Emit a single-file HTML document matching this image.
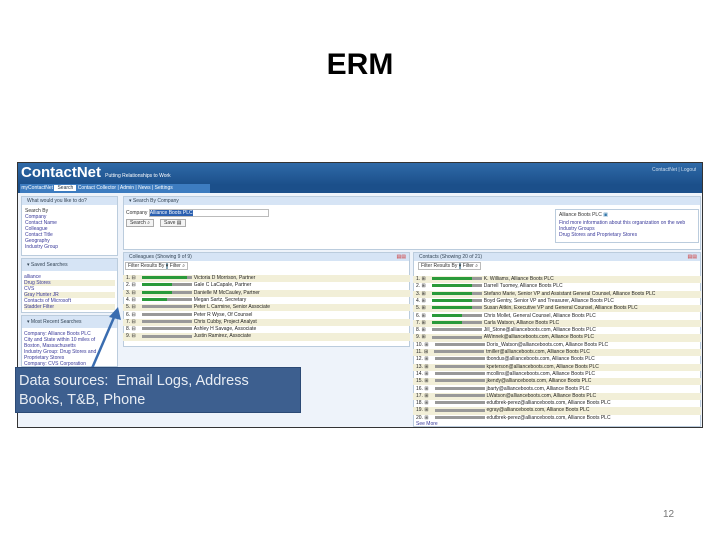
<!DOCTYPE html>
<html><head><meta charset="utf-8"><style>
*{margin:0;padding:0;box-sizing:border-box}
body{width:720px;height:540px;background:#fff;position:relative;overflow:hidden;font-family:"Liberation Sans",sans-serif}
.a{position:absolute}
.t{font-size:5px;color:#333;white-space:nowrap;overflow:hidden}
.row{position:absolute;height:7.3px;font-size:5px;line-height:7.3px;color:#222;white-space:nowrap;overflow:hidden;padding-left:3px}
.row:nth-child(odd){background:#f2efd8}
.bar{display:inline-block;width:50px;height:3px;background:#999;vertical-align:middle;margin:0 2px 0 6px}
.g{background:linear-gradient(90deg,#2a9a3a 0 60%,#999 60%)}
.lk{color:#3a3a9a;font-size:5px;line-height:6px}
.ph{background:#d6e4f5;height:8px;font-size:5px;line-height:8px;color:#345;padding-left:5px}
</style></head><body>
<div class="a" style="left:0;top:48px;width:720px;text-align:center;font-size:30px;font-weight:bold;color:#000;font-family:'Liberation Sans',sans-serif">ERM</div>

<div class="a" style="left:17px;top:162px;width:686px;height:266px;border:1px solid #333;background:#fff"></div>
<div class="a" style="left:18px;top:163px;width:684px;height:22px;background:linear-gradient(#2f6aa8,#1b4f8a)"></div>
<div class="a" style="left:21px;top:163px;font-size:15px;font-weight:bold;color:#fff;line-height:20px">ContactNet <span style="font-size:5px;font-weight:normal">Putting Relationships to Work</span></div>
<div class="a t" style="left:652px;top:167px;color:#cde">ContactNet | Logout</div>
<div class="a" style="left:18px;top:184px;width:684px;height:9px;background:#1b4f8a"></div>
<div class="a" style="left:20px;top:184px;height:9px;width:190px;background:#3d7cc0;font-size:5px;line-height:9px;color:#fff;white-space:nowrap">&nbsp;myContactNet <span style="background:#fff;color:#234;padding:0 3px">Search</span> Contact Collector | Admin | News | Settings</div>

<div class="a" style="left:18px;top:193px;width:684px;height:234px;background:#eef3fa"></div>
<!-- left -->
<div class="a" style="left:21px;top:196px;width:97px;height:60px;background:#fff;border:1px solid #bcd"><div class="ph">What would you like to do?</div><div style="padding:3px" class="lk"><span style="color:#333">Search By</span><br>Company<br>Contact Name<br>Colleague<br>Contact Title<br>Geography<br>Industry Group</div></div>
<div class="a" style="left:21px;top:258px;width:97px;height:55px;background:#fff;border:1px solid #bcd"><div class="ph" style="height:12px;line-height:12px">▾ Saved Searches</div><div class="lk" style="padding:3px 2px"><div>alliance</div><div style="background:#f2efd8">Drug Stores</div><div>CVS</div><div style="background:#f2efd8">Gray Hunter JR</div><div>Contacts of Microsoft</div><div style="background:#f2efd8">Stadder Filter</div></div></div>
<div class="a" style="left:21px;top:315px;width:97px;height:52px;background:#fff;border:1px solid #bcd"><div class="ph" style="height:12px;line-height:12px">▾ Most Recent Searches</div><div class="lk" style="padding:3px 2px">Company: Alliance Boots PLC<br>City and State within 10 miles of<br>Boston, Massachusetts<br>Industry Group: Drug Stores and<br>Proprietary Stores<br>Company: CVS Corporation</div></div>

<!-- search -->
<div class="a" style="left:123px;top:196px;width:578px;height:54px;background:#fff;border:1px solid #bcd"><div class="ph">▾ Search By Company</div></div>
<div class="a t" style="left:126px;top:209px">Company <span style="display:inline-block;width:120px;border:1px solid #bbb;background:#fff"><span style="background:#2a5fb0;color:#fff">Alliance Boots PLC</span></span></div>
<div class="a t" style="left:126px;top:219px;border:1px solid #aaa;padding:0 3px;background:#f4f4f4">Search ⌕</div>
<div class="a t" style="left:160px;top:219px;border:1px solid #aaa;padding:0 3px;background:#f4f4f4">Save ▤</div>
<div class="a" style="left:555px;top:209px;width:144px;height:34px;border:1px solid #bcd;background:#fff;padding:2px 3px"><div class="t">Alliance Boots PLC <span style="color:#37a">▣</span></div><div class="lk" style="margin-top:2px">Find more information about this organization on the web<br>Industry Groups<br>Drug Stores and Proprietary Stores</div></div>

<!-- colleagues -->
<div class="a" style="left:123px;top:252px;width:287px;height:95px;background:#fff;border:1px solid #bcd"><div class="ph">Colleagues (Showing 9 of 9) <span style="float:right;color:#c33;margin-right:3px">▤▤</span></div></div>
<div class="a t" style="left:125px;top:262px;border:1px solid #bbb;padding:0 2px;background:#fff">Filter Results By <span style="background:#8ab">▾</span> Filter ⌕</div>
<div class="a" style="left:123px;top:275px;width:287px">
<div class="row" style="top:0;width:287px">1. ⊟<span class="bar g" style="background:linear-gradient(90deg,#2a9a3a 0 90%,#999 90%)"></span>Victoria D Morrison, Partner</div>
<div class="row" style="top:7.3px;width:287px">2. ⊟<span class="bar g"></span>Gale C LaCapale, Partner</div>
<div class="row" style="top:14.6px;width:287px">3. ⊟<span class="bar g"></span>Danielle M McCauley, Partner</div>
<div class="row" style="top:21.9px;width:287px">4. ⊟<span class="bar g" style="background:linear-gradient(90deg,#2a9a3a 0 50%,#999 50%)"></span>Megan Sartz, Secretary</div>
<div class="row" style="top:29.2px;width:287px">5. ⊟<span class="bar"></span>Peter L Carmine, Senior Associate</div>
<div class="row" style="top:36.5px;width:287px">6. ⊟<span class="bar"></span>Peter R Wyse, Of Counsel</div>
<div class="row" style="top:43.8px;width:287px">7. ⊟<span class="bar"></span>Chris Cubby, Project Analyst</div>
<div class="row" style="top:51.1px;width:287px">8. ⊟<span class="bar"></span>Ashley H Savage, Associate</div>
<div class="row" style="top:58.4px;width:287px">9. ⊟<span class="bar"></span>Justin Ramirez, Associate</div>
</div>

<!-- contacts -->
<div class="a" style="left:413px;top:252px;width:288px;height:175px;background:#fff;border:1px solid #bcd"><div class="ph">Contacts (Showing 20 of 21) <span style="float:right;color:#c33;margin-right:3px">▤▤</span></div></div>
<div class="a t" style="left:418px;top:262px;border:1px solid #bbb;padding:0 2px;background:#fff">Filter Results By <span style="background:#8ab">▾</span> Filter ⌕</div>
<div class="a" style="left:413px;top:276px;width:288px">
<div class="row" style="top:0;width:288px">1. ⊞<span class="bar g" style="background:linear-gradient(90deg,#2a9a3a 0 80%,#999 80%)"></span>K. Williams, Alliance Boots PLC</div>
<div class="row" style="top:7.3px;width:288px">2. ⊞<span class="bar g" style="background:linear-gradient(90deg,#2a9a3a 0 80%,#999 80%)"></span>Darrell Tuomey, Alliance Boots PLC</div>
<div class="row" style="top:14.6px;width:288px">3. ⊞<span class="bar g" style="background:linear-gradient(90deg,#2a9a3a 0 80%,#999 80%)"></span>Stefano Marie, Senior VP and Assistant General Counsel, Alliance Boots PLC</div>
<div class="row" style="top:21.9px;width:288px">4. ⊞<span class="bar g" style="background:linear-gradient(90deg,#2a9a3a 0 80%,#999 80%)"></span>Boyd Gentry, Senior VP and Treasurer, Alliance Boots PLC</div>
<div class="row" style="top:29.2px;width:288px">5. ⊞<span class="bar g" style="background:linear-gradient(90deg,#2a9a3a 0 80%,#999 80%)"></span>Susan Aitkin, Executive VP and General Counsel, Alliance Boots PLC</div>
<div class="row" style="top:36.5px;width:288px">6. ⊞<span class="bar g"></span>Chris Mollet, General Counsel, Alliance Boots PLC</div>
<div class="row" style="top:43.8px;width:288px">7. ⊞<span class="bar g"></span>Carla Watson, Alliance Boots PLC</div>
<div class="row" style="top:51.1px;width:288px">8. ⊞<span class="bar"></span>Jill_Stone@allianceboots.com, Alliance Boots PLC</div>
<div class="row" style="top:58.4px;width:288px">9. ⊞<span class="bar"></span>AWinnek@allianceboots.com, Alliance Boots PLC</div>
<div class="row" style="top:65.7px;width:288px">10. ⊞<span class="bar"></span>Doris_Watson@allianceboots.com, Alliance Boots PLC</div>
<div class="row" style="top:73px;width:288px">11. ⊞<span class="bar"></span>tmiller@allianceboots.com, Alliance Boots PLC</div>
<div class="row" style="top:80.3px;width:288px">12. ⊞<span class="bar"></span>tbondus@allianceboots.com, Alliance Boots PLC</div>
<div class="row" style="top:87.6px;width:288px">13. ⊞<span class="bar"></span>kpeterson@allianceboots.com, Alliance Boots PLC</div>
<div class="row" style="top:94.9px;width:288px">14. ⊞<span class="bar"></span>mcollins@allianceboots.com, Alliance Boots PLC</div>
<div class="row" style="top:102.2px;width:288px">15. ⊞<span class="bar"></span>jkendy@allianceboots.com, Alliance Boots PLC</div>
<div class="row" style="top:109.5px;width:288px">16. ⊞<span class="bar"></span>jbarty@allianceboots.com, Alliance Boots PLC</div>
<div class="row" style="top:116.8px;width:288px">17. ⊞<span class="bar"></span>LWatson@allianceboots.com, Alliance Boots PLC</div>
<div class="row" style="top:124.1px;width:288px">18. ⊞<span class="bar"></span>edutbrek-perez@allianceboots.com, Alliance Boots PLC</div>
<div class="row" style="top:131.4px;width:288px">19. ⊞<span class="bar"></span>egray@allianceboots.com, Alliance Boots PLC</div>
<div class="row" style="top:138.7px;width:288px">20. ⊞<span class="bar"></span>edutbrek-perez@allianceboots.com, Alliance Boots PLC</div>
</div>
<div class="a lk" style="left:416px;top:421px">See More</div>

<!-- arrow -->
<svg class="a" style="left:85px;top:305px" width="40" height="70"><line x1="5" y1="68" x2="30" y2="10" stroke="#3a6db0" stroke-width="2.5"/><polygon points="33,2 24,12 36,15" fill="#3a6db0"/></svg>
<div class="a" style="left:15px;top:367px;width:286px;height:46px;background:#3d5f8f;border:1px solid #2c4a75;color:#e8edf4;font-size:14.5px;line-height:19px;padding:4px 3px">Data sources: &nbsp;Email Logs, Address Books, T&amp;B, Phone</div>

<div class="a" style="left:663px;top:509px;font-size:10px;color:#777">12</div>
</body></html>
